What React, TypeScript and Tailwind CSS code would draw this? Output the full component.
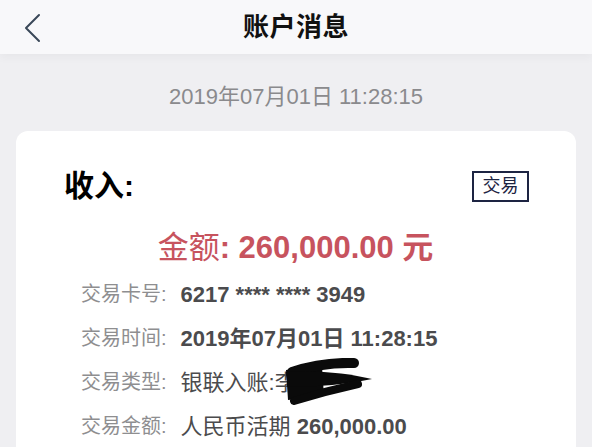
import React from "react";

const font = { fontFamily: '"Liberation Sans", "Noto Sans CJK SC", sans-serif' };

function Scribble() {
  return (
    <svg
      className="absolute left-[3px] top-[-8px]"
      width="100"
      height="48"
      viewBox="0 0 100 48"
    >
      <path d="M8 12 L44 8 L46 38 L10 42 Z" fill="#0a0a0a" />
      <path d="M76 5 Q44 4 14 14" stroke="#0a0a0a" strokeWidth="10" strokeLinecap="round" fill="none" />
      <path d="M8 14 C40 12 70 15 94 21 C70 26 40 29 10 29 Z" fill="#0a0a0a" />
      <path d="M80 26 Q48 33 16 43" stroke="#0a0a0a" strokeWidth="8" strokeLinecap="round" fill="none" />
    </svg>
  );
}

function Row({ label, children }: { label: string; children: React.ReactNode }) {
  return (
    <div className="flex items-center h-[44px] whitespace-nowrap">
      <span className="text-[20px] text-[#8e8e90]">{label}:</span>
      <span className="ml-[14px] text-[22px] text-[#4b4b4d] relative">{children}</span>
    </div>
  );
}

export default function App() {
  return (
    <div className="w-[592px] h-[447px] overflow-hidden bg-[#efeff2] flex flex-col" style={font}>
      <div className="h-[54px] shrink-0 bg-[#f8f8fa] relative flex items-center justify-center shadow-[0_4px_8px_rgba(0,0,0,0.035)]">
        <svg className="absolute left-[22px] top-[13px]" width="20" height="30" viewBox="0 0 20 30">
          <path d="M17 2 L4 15 L17 28" stroke="#3a4858" strokeWidth="2" fill="none" strokeLinecap="round" strokeLinejoin="round" />
        </svg>
        <h1 className="text-[26px] font-semibold text-[#111] tracking-[0.5px]">账户消息</h1>
      </div>

      <div className="mt-[32px] text-center text-[22px] leading-[22px] text-[#8a8a8d]">
        2019年07月01日 11:28:15
      </div>

      <div className="mt-[23px] mx-[16px] flex-1 bg-white rounded-t-[12px] pl-[48px] pr-[47px] pt-[39px]">
        <div className="flex items-center justify-between">
          <span className="text-[30px] leading-[32px] font-bold text-black">收入:</span>
          <span className="w-[57px] h-[31px] border-2 border-[#1d2442] flex items-center justify-center text-[18px] text-[#1d2442]">
            交易
          </span>
        </div>

        <div className="mt-[30px] text-center text-[31px] leading-[32px] font-bold text-[#c7535e] -ml-[2px]">
          <span className="font-normal">金额</span>: 260,000.00 元
        </div>

        <div className="mt-[8px] ml-[17px]">
          <Row label="交易卡号">
            <span className="font-bold">6217 **** **** 3949</span>
          </Row>
          <Row label="交易时间">
            <span className="font-bold">2019年07月01日 11:28:15</span>
          </Row>
          <Row label="交易类型">
            <span>
              银联入账:<span className="relative inline-block w-[14px]">李<Scribble /></span>
            </span>
          </Row>
          <Row label="交易金额">
            人民币活期 <span className="font-bold">260,000.00</span>
          </Row>
        </div>
      </div>
    </div>
  );
}
